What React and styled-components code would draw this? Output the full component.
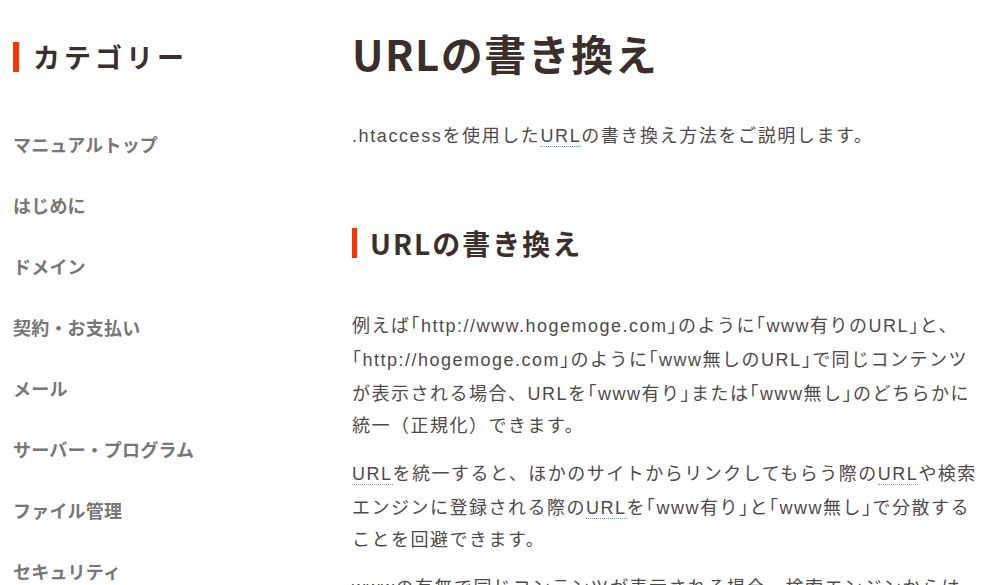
import React from "react";
import styled, { createGlobalStyle } from "styled-components";

const Global = createGlobalStyle`
  html, body { margin: 0; padding: 0; background: #fff; }
  body {
    font-family: "Noto Sans CJK JP", "Noto Sans", sans-serif;
    -webkit-font-smoothing: antialiased;
  }
  * { box-sizing: border-box; }
`;

const Page = styled.div`
  display: grid;
  grid-template-columns: 339px 628px;
  padding-left: 13px;
  height: 585px;
  overflow: hidden;
`;

const Sidebar = styled.aside`
  display: flex;
  flex-direction: column;
  padding-top: 42px;
`;

const SideTitle = styled.h2`
  margin: 0;
  height: 30px;
  line-height: 30px;
  border-left: 6px solid #ff3300;
  padding-left: 14px;
  font-size: 27px;
  font-weight: 700;
  letter-spacing: 4px;
  color: #3b2f2c;
`;

const NavList = styled.ul`
  list-style: none;
  margin: 42px 0 0;
  padding: 0;
`;

const NavItem = styled.li`
  height: 61px;
  line-height: 61px;
  font-size: 18px;
  font-weight: 700;
  color: #777;
  letter-spacing: 0.2px;
`;

const Main = styled.main`
  display: flex;
  flex-direction: column;
  color: #4f4a48;
  font-family: "Liberation Sans", "Noto Sans CJK JP", sans-serif;
`;

const Title = styled.h1`
  margin: 28px 0 0;
  font-family: "Noto Sans CJK JP", sans-serif;
  font-size: 42px;
  line-height: 50px;
  font-weight: 700;
  letter-spacing: 1.5px;
  color: #3b2f2c;
`;

const Lead = styled.p`
  margin: 42px 0 0;
  font-size: 18px;
  line-height: 32px;
  letter-spacing: 1.6px;
`;

const Section = styled.h2`
  margin: 76px 0 0;
  height: 30px;
  line-height: 30px;
  border-left: 5px solid #ff3300;
  padding-left: 13px;
  font-family: "Noto Sans CJK JP", sans-serif;
  font-size: 28px;
  font-weight: 700;
  letter-spacing: 2px;
  color: #3b2f2c;
`;

const Body = styled.p`
  margin: ${(p) => (p.$first ? "50px" : "16px")} 0 0;
  font-size: 18px;
  line-height: 32px;
  letter-spacing: 1.5px;
`;

const Quote = styled.span`
  &::before,
  &::after {
    font-family: "Noto Sans CJK JP", sans-serif;
    font-feature-settings: "halt";
  }
  &::before { content: "「"; }
  &::after { content: "」"; }
`;

const Term = styled.span`
  border-bottom: 1px dotted ${(p) => p.$tone || "#4fa3c7"};
  line-height: 1.2;
`;

const nav = [
  "マニュアルトップ",
  "はじめに",
  "ドメイン",
  "契約・お支払い",
  "メール",
  "サーバー・プログラム",
  "ファイル管理",
  "セキュリティ",
];

export default function App() {
  return (
    <>
      <Global />
      <Page>
        <Sidebar>
          <SideTitle>カテゴリー</SideTitle>
          <NavList>
            {nav.map((n) => (
              <NavItem key={n}>{n}</NavItem>
            ))}
          </NavList>
        </Sidebar>
        <Main>
          <Title>URLの書き換え</Title>
          <Lead>
            .htaccessを使用した<Term>URL</Term>の書き換え方法をご説明します。
          </Lead>
          <Section>URLの書き換え</Section>
          <Body $first>
            例えば<Quote>http://www.hogemoge.com</Quote>のように<Quote>www有りのURL</Quote>と、<Quote>http://hogemoge.com</Quote>のように<Quote>www無しのURL</Quote>で同じコンテンツが表示される場合、URLを<Quote>www有り</Quote>または<Quote>www無し</Quote>のどちらかに統一（正規化）できます。
          </Body>
          <Body>
            <Term $tone="#8a9aa8">URL</Term>を統一すると、ほかのサイトからリンクしてもらう際の<Term $tone="#8a9aa8">URL</Term>や検索エンジンに登録される際の<Term>URL</Term>を<Quote>www有り</Quote>と<Quote>www無し</Quote>で分散することを回避できます。
          </Body>
          <Body>
            wwwの有無で同じコンテンツが表示される場合、検索エンジンからは別のサイトと判断されてしまう可能性があります。
          </Body>
        </Main>
      </Page>
    </>
  );
}
